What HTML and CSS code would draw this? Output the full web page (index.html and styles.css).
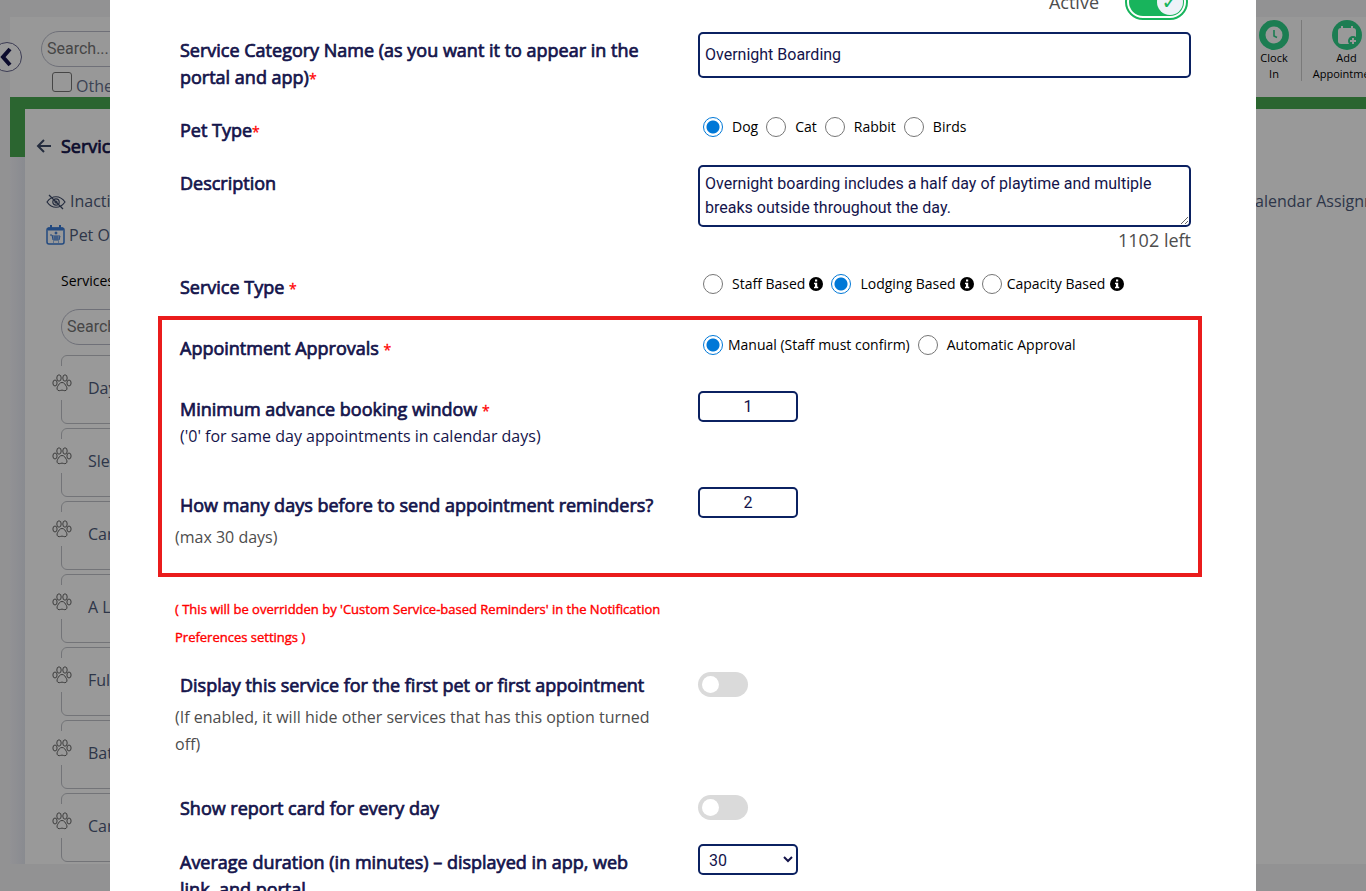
FILE: index.html
```html
<!DOCTYPE html>
<html lang="en">
<head>
    <meta charset="UTF-8">
    <meta name="viewport" content="width=device-width, initial-scale=1.0">
    <title>Service Category</title>
    <link rel="stylesheet" href="styles.css">
</head>
<body>
    <!-- shared icons -->
    <svg class="sprite" aria-hidden="true">
        <symbol id="paw" viewBox="0 0 20 18">
            <g fill="none" stroke="currentColor" stroke-width="1">
                <ellipse cx="7" cy="4" rx="2.2" ry="3.2"/>
                <ellipse cx="13" cy="4" rx="2.2" ry="3.2"/>
                <ellipse cx="3" cy="9" rx="2.1" ry="3"/>
                <ellipse cx="17" cy="9" rx="2.1" ry="3"/>
                <path d="M10 8.5c-2.6 0-3.3 2.4-4.3 3.8-1.4 2-.6 4.4 1.5 4.4 1.2 0 1.8-.6 2.8-.6s1.6.6 2.8.6c2.1 0 2.9-2.4 1.5-4.4-1-1.4-1.7-3.8-4.3-3.8z"/>
            </g>
        </symbol>
        <symbol id="info" viewBox="0 0 14 14">
            <circle cx="7" cy="7" r="7" fill="#000"/>
            <path d="M6 2.5h2.2v2H6zM5 5.7h3.2v4h1v1.5H5V9.7h1V7.2H5z" fill="#fff"/>
        </symbol>
    </svg>

    <div class="page">
        <button type="button" class="collapse" aria-label="Collapse menu">
            <svg width="14" height="20" viewBox="0 0 14 20"><path d="M11 2L4 10l7 8" fill="none" stroke="#14144b" stroke-width="4"/></svg>
        </button>
        <div class="main">
            <header class="topbar">
                <div class="find">
                    <input type="text" class="search" placeholder="Search..." aria-label="Search">
                    <label class="other"><input type="checkbox"> Other</label>
                </div>
                <nav class="tools">
                    <a href="#" class="tool">
                        <svg width="30" height="30" viewBox="0 0 30 30"><circle cx="15" cy="15" r="15" fill="#30d089"/><circle cx="15" cy="15" r="8.5" fill="#fff"/><path d="M15 10v6l3 1.500" fill="none" stroke="#30d089" stroke-width="1.600"/></svg>
                        Clock<br>In
                    </a>
                    <a href="#" class="tool wide">
                        <svg width="30" height="30" viewBox="0 0 30 30"><circle cx="15" cy="15" r="15" fill="#30d089"/><rect x="6" y="8" width="18" height="16" rx="3" fill="#fff"/><path d="M10 6v4M20 6v4" stroke="#fff" stroke-width="2"/><circle cx="21" cy="21" r="5" fill="#30d089"/><path d="M21 18v6M18 21h6" stroke="#fff" stroke-width="2"/></svg>
                        Add<br>Appointment
                    </a>
                </nav>
            </header>
            <div class="shell">
                <div class="panel">
                    <h2 class="panel-title">
                        <svg width="15" height="14" viewBox="0 0 15 14"><path d="M15 7H2M8 1L2 7l6 6" fill="none" stroke="#3d4a68" stroke-width="2"/></svg>
                        Services
                    </h2>
                    <div class="links">
                        <a href="#" class="link">
                            <svg width="20" height="18" viewBox="0 0 20 18" fill="none" stroke="#3d4a68" stroke-width="1.2"><path d="M1 10c5-7 13-7 18 0-5 7-13 7-18 0z"/><circle cx="10" cy="10" r="3.2"/><circle cx="10" cy="10" r="1"/><path d="M3 3l14 14"/></svg>
                            Inactive
                        </a>
                        <a href="#" class="assign">Calendar Assignment</a>
                    </div>
                    <div class="links">
                        <a href="#" class="link">
                            <svg width="19" height="20" viewBox="0 0 19 20" fill="none" stroke="#3a7bd5"><rect x="1" y="3" width="17" height="16" rx="2" stroke-width="1.5"/><path d="M2 3h15v2H2z" fill="#3a7bd5"/><path d="M5 0v4M14 0v4" stroke-width="2"/><path d="M4 10h2l1 5h6l1-4H6M7 13h6M9 11v4M11 11v4M7 17h1M12 17h1" stroke-width="1"/><circle cx="10" cy="8" r="1" fill="#3a7bd5"/></svg>
                            Pet Owner
                        </a>
                    </div>
                    <div class="services">
                        <label for="serviceSearch">Services</label>
                        <input type="text" class="search" id="serviceSearch" placeholder="Search...">
                        <ul class="cards">
                            <li><svg width="20" height="18"><use href="#paw"/></svg>Daycare</li>
                            <li><svg width="20" height="18"><use href="#paw"/></svg>Sleepover</li>
                            <li><svg width="20" height="18"><use href="#paw"/></svg>Care</li>
                            <li><svg width="20" height="18"><use href="#paw"/></svg>A La Carte</li>
                            <li><svg width="20" height="18"><use href="#paw"/></svg>Full Groom</li>
                            <li><svg width="20" height="18"><use href="#paw"/></svg>Bath</li>
                            <li><svg width="20" height="18"><use href="#paw"/></svg>Care</li>
                        </ul>
                    </div>
                </div>
            </div>
        </div>
    </div>

    <div class="overlay">
        <form class="modal" id="serviceForm">
            <label class="active">Active <input type="checkbox" class="toggle" checked></label>

            <div class="row">
                <label class="name" for="categoryName">Service Category Name (as you want it to appear in the portal and app)<span class="req">*</span></label>
                <input type="text" class="box" id="categoryName" value="Overnight Boarding">
            </div>
            <div class="row">
                <div class="name" id="petType">Pet Type<span class="req">*</span></div>
                <div class="options" role="radiogroup" aria-labelledby="petType">
                    <label><input type="radio" name="pet" checked> Dog</label>
                    <label><input type="radio" name="pet"> Cat</label>
                    <label><input type="radio" name="pet"> Rabbit</label>
                    <label><input type="radio" name="pet"> Birds</label>
                </div>
            </div>
            <div class="row tight">
                <label class="name" for="description">Description</label>
                <div>
                    <textarea class="box" id="description">Overnight boarding includes a half day of playtime and multiple breaks outside throughout the day.</textarea>
                    <div class="count">1102 left</div>
                </div>
            </div>
            <div class="row tight">
                <div class="name" id="serviceType">Service Type <span class="req">*</span></div>
                <div class="options" role="radiogroup" aria-labelledby="serviceType">
                    <label><input type="radio" name="type"> Staff Based <svg class="info"><use href="#info"/></svg></label>
                    <label><input type="radio" name="type" checked> Lodging Based <svg class="info"><use href="#info"/></svg></label>
                    <label class="near"><input type="radio" name="type"> Capacity Based <svg class="info"><use href="#info"/></svg></label>
                </div>
            </div>

            <section class="highlight">
                <div class="row">
                    <div class="name" id="approvals">Appointment Approvals <span class="req">*</span></div>
                    <div class="options" role="radiogroup" aria-labelledby="approvals">
                        <label class="near"><input type="radio" name="approval" checked> Manual (Staff must confirm)</label>
                        <label><input type="radio" name="approval"> Automatic Approval</label>
                    </div>
                </div>
                <div class="row">
                    <label class="name" for="advance">Minimum advance booking window <span class="req">*</span>
                        <span class="hint">('0' for same day appointments in calendar days)</span></label>
                    <input type="text" class="box small" id="advance" value="1">
                </div>
                <div class="row">
                    <div>
                        <label class="name" for="reminder">How many days before to send appointment reminders?</label>
                        <p class="note">(max 30 days)</p>
                    </div>
                    <input type="text" class="box small" id="reminder" value="2">
                </div>
            </section>

            <div class="row tight">
                <p class="warning">( This will be overridden by 'Custom Service-based Reminders' in the Notification Preferences settings )</p>
            </div>
            <div class="row loose">
                <div>
                    <label class="name" for="firstPet">Display this service for the first pet or first appointment</label>
                    <p class="note">(If enabled, it will hide other services that has this option turned off)</p>
                </div>
                <input type="checkbox" class="switch" id="firstPet">
            </div>
            <div class="row">
                <label class="name" for="reportCard">Show report card for every day</label>
                <input type="checkbox" class="switch" id="reportCard">
            </div>
            <div class="row">
                <label class="name" for="duration">Average duration (in minutes) – displayed in app, web link, and portal</label>
                <select class="box small" id="duration">
                    <option>15</option>
                    <option selected>30</option>
                    <option>60</option>
                </select>
            </div>
        </form>
    </div>
</body>
</html>
```

FILE: styles.css
```css
* {
    box-sizing: border-box;
}

body {
    margin: 0;
    height: 100vh;
    overflow: hidden;
    position: relative;
    font-family: "Open Sans", sans-serif;
    font-size: 16px;
    color: #4d5a7a;
}

h2, p, ul {
    margin: 0;
    padding: 0;
}

a {
    color: inherit;
    text-decoration: none;
}

.sprite {
    position: absolute;
    width: 0;
    height: 0;
}

/* page behind the dialog */
.page {
    height: 100%;
    padding: 17px 0 27px 10px;
    background: #f3f3f5;
}

.collapse {
    position: absolute;
    left: -8px;
    top: 42px;
    width: 30px;
    height: 30px;
    padding: 0 2px 0 0;
    border: 1px solid #65658c;
    border-radius: 50%;
    background: #fff;
    display: flex;
    align-items: center;
    justify-content: center;
}

.main {
    height: 100%;
    display: flex;
    flex-direction: column;
}

.topbar {
    height: 80px;
    flex-shrink: 0;
    display: flex;
    justify-content: space-between;
    background: #fefefe;
    overflow: hidden;
}

.find {
    padding: 14px 0 0 31px;
}

.search {
    display: block;
    width: 240px;
    height: 36px;
    padding: 0 5px 2px;
    border: 1px solid #b9bbc9;
    border-radius: 18px;
    background: transparent;
    font: 16px Roboto, sans-serif;
}

.other {
    display: flex;
    align-items: flex-start;
    gap: 4px;
    padding: 5px 0 0 11px;
    line-height: 28px;
    color: #65708c;
}

.other input {
    appearance: none;
    width: 20px;
    height: 20px;
    margin: 0;
    border: 1px solid #767676;
    border-radius: 3px;
}

.tools {
    display: flex;
    margin-right: -26px;
    padding-top: 3px;
}

.tool {
    width: 55px;
    height: 61px;
    border-right: 1px solid #ccc;
    text-align: center;
    font-size: 11px;
    line-height: 16px;
    color: #000;
}

.tool svg {
    display: block;
    margin: 0 auto;
}

.wide {
    width: 90px;
}

.shell {
    flex: 1;
    min-height: 0;
    padding: 12px 0 0 15px;
    background: linear-gradient(#48a850, #48a850) 0 0 / 100% 60px no-repeat,
                linear-gradient(to right, #f3f3f8, #e4e7f0 16px);
}

.panel {
    height: 100%;
    background: #fff;
    overflow: hidden;
}

.panel-title {
    display: flex;
    align-items: center;
    gap: 10px;
    padding: 25px 0 0 11px;
    font-size: 18px;
    font-weight: normal;
    line-height: 24px;
    color: #14144b;
    -webkit-text-stroke: 0.04em;
}

.links {
    display: flex;
    justify-content: space-between;
    height: 34px;
    line-height: 34px;
}

.panel-title + .links {
    margin-top: 26px;
}

.link {
    display: flex;
    align-items: center;
    gap: 4px;
    padding-left: 21px;
}

.assign {
    width: 121px;
    white-space: nowrap;
}

.services {
    padding: 19px 0 0 36px;
    width: 320px;
}

.services label {
    display: block;
    margin-bottom: 18px;
    font-size: 14px;
    line-height: 20px;
    color: #000;
}

.cards {
    list-style: none;
    padding-top: 10px;
}

.cards li {
    display: flex;
    align-items: center;
    gap: 16px;
    height: 69px;
    margin-bottom: 4px;
    padding-bottom: 4px;
    border: 1px solid #c0c2c8;
    border-radius: 6px;
}

/* the paw sits on the card's left edge and breaks the line */
.cards svg {
    box-sizing: content-box;
    margin: -10px 0 0 -10px;
    padding: 8px 0;
    background: #fff;
    color: #666;
}

/* dialog */
.overlay {
    position: absolute;
    inset: 0;
    padding: 0 110px;
    background: rgba(0, 0, 0, 0.4);
}

.modal {
    height: 100%;
    padding: 0 65px;
    background: #fff;
    overflow: hidden;
}

.active {
    display: flex;
    justify-content: flex-end;
    align-items: center;
    gap: 26px;
    margin: -16px 3px 12px 0;
    font-size: 18px;
    color: #4d4d4d;
}

.toggle {
    appearance: none;
    width: 63px;
    height: 36px;
    margin: 0;
    padding: 2px;
    border: 2px solid #18b45c;
    border-radius: 18px;
    background: #18b45c content-box;
    display: flex;
    justify-content: flex-end;
    align-items: center;
}

.toggle::before {
    content: "✓";
    width: 26px;
    height: 26px;
    margin-right: 1px;
    border-radius: 50%;
    background: #eef2f8;
    color: #18b45c;
    font: bold 20px/26px "DejaVu Sans", sans-serif;
    text-align: center;
}

.row {
    display: grid;
    grid-template-columns: 1fr 1fr;
    column-gap: 30px;
    align-items: start;
    margin-bottom: 21px;
}

.tight {
    margin-bottom: 15px;
}

.loose {
    margin-bottom: 32px;
}

.name {
    display: block;
    padding: 5px 5px 0;
    font-size: 18px;
    line-height: 27px;
    color: #14144b;
    -webkit-text-stroke: 0.04em;
}

.req {
    font-size: 14px;
    line-height: 14px;
    color: #f00;
    -webkit-text-stroke: 0.02em;
}

.hint {
    display: block;
    font-size: 16px;
    -webkit-text-stroke: 0;
}

.note {
    padding-top: 5px;
    line-height: 27px;
    color: #4d4d4d;
}

.warning {
    padding-bottom: 1px;
    font-size: 13px;
    line-height: 28px;
    color: #f00;
    -webkit-text-stroke: 0.03em;
}

.box {
    display: block;
    width: 100%;
    height: 46px;
    margin: 0;
    padding: 0 5px 2px;
    border: 2px solid #0b2161;
    border-radius: 5px;
    background: #fff;
    color: #14144b;
    font: 16px/24px Roboto, sans-serif;
}

textarea.box {
    height: 62px;
    padding: 5px;
}

.small {
    width: 100px;
    height: 31px;
    padding: 0 5px;
    text-align: center;
}

select.small {
    padding-top: 2px;
    text-align: left;
}

.count {
    text-align: right;
    font-size: 18px;
    line-height: 27px;
    color: #4d4d4d;
}

.options {
    display: flex;
    gap: 8px;
    padding: 5px 0 0 5px;
}

.options label {
    display: flex;
    align-items: center;
    gap: 9px;
    font-size: 14px;
    line-height: 20px;
    color: #000;
}

.options .near {
    gap: 5px;
}

.options input {
    appearance: none;
    width: 20px;
    height: 20px;
    margin: 0;
    border: 1px solid #767676;
    border-radius: 50%;
}

.options input:checked {
    border-color: #0078d7;
    background: radial-gradient(circle, #0078d7 6px, #fff 7px);
}

.info {
    width: 14px;
    height: 14px;
    margin-left: -5px;
}

.near .info {
    margin-left: 0;
}

.highlight {
    margin: 0 -11px 18px -17px;
    padding: 10px 7px 22px 13px;
    border: 4px solid #ea1c1c;
}

.highlight .row {
    margin-bottom: 29px;
}

.highlight .row + .row {
    margin-bottom: 37px;
}

.highlight .row:last-child {
    margin-bottom: 0;
}

.switch {
    appearance: none;
    width: 50px;
    height: 25px;
    margin: 5px 0 3px;
    padding: 4px;
    border-radius: 13px;
    background: #dadada;
}

.switch::before {
    content: "";
    display: block;
    width: 17px;
    height: 17px;
    border-radius: 50%;
    background: #fff;
}
```
